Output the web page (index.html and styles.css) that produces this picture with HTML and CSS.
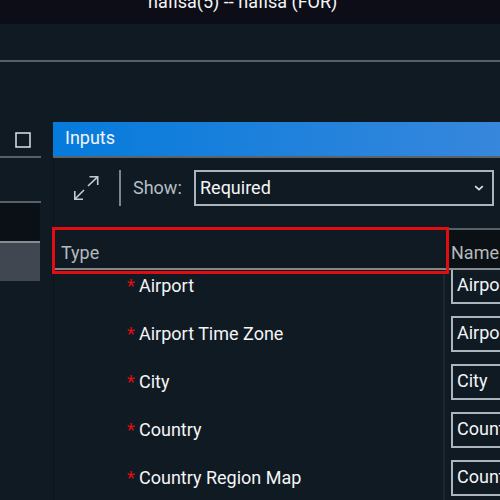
FILE: index.html
```html
<!DOCTYPE html>
<html lang="en">
<head>
<meta charset="utf-8">
<title>Inputs</title>
<link rel="stylesheet" href="styles.css">
</head>
<body>
<header class="titlebar"><span>nafisa(5) -- nafisa (FOR)</span></header>
<div class="menubar"></div>
<main class="workspace">
  <aside class="side">
    <div class="side-head"><svg class="maximize" width="16" height="16" viewBox="0 0 16 16"><path d="M1 1h14v14H1z"/></svg></div>
    <div class="side-tools"></div>
    <div class="side-columns"></div>
    <div class="side-row"></div>
  </aside>
  <section class="panel">
    <h1 class="panel-title">Inputs</h1>
    <div class="toolbar">
      <svg class="expand" width="26" height="26" viewBox="0 0 26 26"><path d="M15 11 24.6 1.8M16.5 1.8h8.2V10M11 15 1.8 24.2M1.8 16v8.2H10"/></svg>
      <span class="divider"></span>
      <span class="label">Show:</span>
      <div class="select"><span>Required</span><svg width="10" height="7" viewBox="0 0 10 7"><path d="M1.2 1.2 5 4.6 8.8 1.2"/></svg></div>
    </div>
    <div class="table">
      <div class="head"><div class="type">Type</div><div class="name">Name</div></div>
      <div class="highlight"></div>
      <div class="rows">
        <div class="row"><div class="kind"><i>*</i>Airport</div><div class="field">Airport</div></div>
        <div class="row"><div class="kind"><i>*</i>Airport Time Zone</div><div class="field">Airport Time Zone</div></div>
        <div class="row"><div class="kind"><i>*</i>City</div><div class="field">City</div></div>
        <div class="row"><div class="kind"><i>*</i>Country</div><div class="field">Country</div></div>
        <div class="row"><div class="kind"><i>*</i>Country Region Map</div><div class="field">Country Region Map</div></div>
      </div>
    </div>
  </section>
</main>
</body>
</html>
```
FILE: styles.css
```css
* { box-sizing: border-box; }
body {
  margin: 0;
  width: 500px;
  height: 500px;
  overflow: hidden;
  display: flex;
  flex-direction: column;
  background: #101a23;
  color: #f3f5f7;
  font: 18px/24px Roboto, sans-serif;
}
.titlebar {
  flex: none;
  height: 24px;
  padding-left: 148px;
  background: #0c0d16;
  overflow: hidden;
  white-space: nowrap;
}
.titlebar span { display: block; margin-top: -10px; }
.menubar { flex: none; height: 38px; border-bottom: 2px solid #566069; }
.workspace { display: flex; gap: 12px; padding-top: 60px; }
.side { flex: none; width: 41px; }
.side-head {
  height: 36px;
  padding: 10px 10px 0 15px;
  border-bottom: 2px solid #566069;
}
.maximize { display: block; fill: none; stroke: #dce4e9; stroke-width: 1.5; }
.side-tools { height: 45px; border-bottom: 2px solid #566069; }
.side-columns { width: 40px; height: 40px; background: #0a1016; border-bottom: 2px solid #858b91; }
.side-row { width: 40px; height: 38px; background: #404750; }
.panel { flex: none; width: 447px; height: 378px; box-shadow: inset 1px 0 #0b141c; }
.panel-title {
  height: 36px;
  margin: 0;
  padding: 4px 12px;
  border-bottom: 2px solid #59636b;
  background: linear-gradient(90deg, #057bdc, #3787dc) padding-box;
  font: inherit;
}
.toolbar { display: flex; align-items: center; height: 70px; padding: 12px 6px 22px 20px; }
.expand { fill: none; stroke: #c3cbd0; stroke-width: 1.6; }
.divider { width: 2px; height: 36px; margin-left: 20px; background: #7d858c; }
.label { width: 61px; margin-left: 12px; color: #b6bec4; }
.select {
  display: flex;
  align-items: center;
  justify-content: space-between;
  width: 300px;
  height: 36px;
  padding: 0 8px 0 4px;
  border: 2px solid #abb5bd;
}
.select svg { fill: none; stroke: #dce3e7; stroke-width: 1.7; }
.table { position: relative; width: 526px; }
.head { display: flex; height: 42px; color: #b4babf; }
.type { width: 396px; padding: 13px 8px 0; border-bottom: 2px solid #858789; }
.name {
  flex: 1;
  padding: 11px 2px 0;
  border-top: 2px solid #566069;
  border-bottom: 2px solid #858b91;
  background: #0b1015;
}
.highlight {
  position: absolute;
  left: -1px;
  top: -1px;
  width: 397px;
  height: 47px;
  border: 3px solid #e20c13;
}
.rows { height: 230px; overflow: hidden; }
.row { display: flex; align-items: center; height: 48px; }
.row:first-child { margin-top: -8px; }
.kind {
  display: flex;
  flex: none;
  width: 392px;
  height: 48px;
  padding: 12px 0 0 74px;
  border-right: 2px solid #1b262e;
}
.kind i { width: 12px; color: #e20c13; font-style: normal; }
.field {
  flex: none;
  height: 36px;
  margin-left: 6px;
  padding: 3px 4px;
  border: 2px solid #abb5bd;
  width: 128px;
  overflow: hidden;
  white-space: nowrap;
}
```
